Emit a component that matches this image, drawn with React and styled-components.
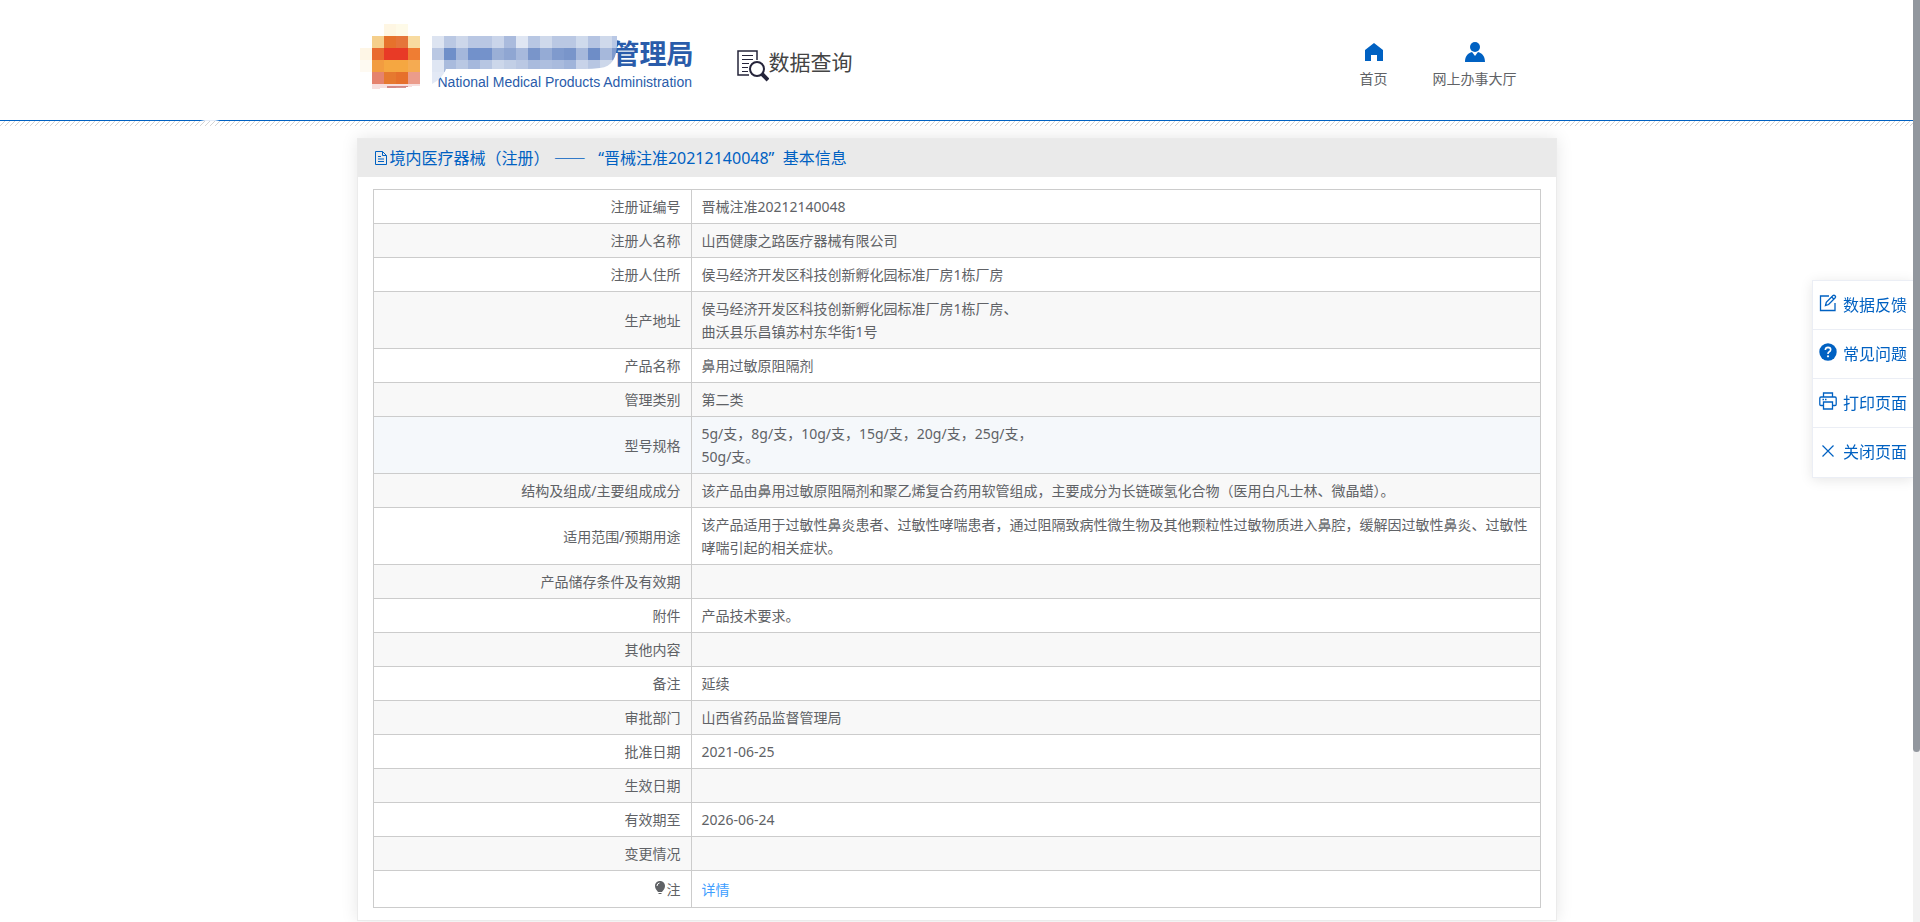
import React from "react";
import styled, { createGlobalStyle } from "styled-components";

const GlobalStyle = createGlobalStyle`
  * { box-sizing: border-box; }
  html { scrollbar-width: none; }
  body {
    margin: 0;
    background: #fff;
    color: #606266;
    font-family: "Noto Sans", "Noto Sans CJK SC", sans-serif;
    font-size: 14px;
    line-height: 23px;
  }
  a { color: inherit; text-decoration: none; }
`;

const Page = styled.div`
  min-height: 100vh;
  padding-right: 7px;
`;

const Header = styled.header`
  background: #fff;
`;

const HeaderInner = styled.div`
  max-width: 1200px;
  height: 120px;
  margin: 0 auto;
  display: flex;
  align-items: flex-start;
`;

const HeaderRule = styled.div`
  height: 1px;
  background: linear-gradient(90deg, #0061c2 200px, #e6eefa 205px, #e6eefa 215px, #0061c2 220px);
`;

const Hatch = styled.div`
  height: 5px;
  background: linear-gradient(135deg, transparent 44%, #d4d4d4 44%, #d4d4d4 56%, transparent 56%) 0 0 / 5px 5px;
`;

const Brand = styled.a`
  position: relative;
  width: 380px;
  padding: 38px 0 0 81px;
  display: block;
  color: #2a5caa;
`;

const BrandName = styled.span`
  display: block;
  width: 256px;
  font-size: 27px;
  font-weight: 700;
  line-height: 32px;
  text-align: right;
`;

const BrandEnglish = styled.span`
  display: block;
  font-family: "Liberation Sans", sans-serif;
  font-size: 14px;
  line-height: 24px;
  white-space: nowrap;
`;

const Mosaic = styled.svg`
  position: absolute;
  left: 3px;
  top: 24px;
`;

const Section = styled.div`
  display: flex;
  align-items: flex-start;
  padding-top: 48px;
  color: #444;
  font-size: 21px;
  line-height: 28px;
  svg { margin-top: 2px; }
`;

const Nav = styled.nav`
  margin-left: auto;
  padding: 41px 40px 0 0;
  display: flex;
  gap: 45px;
`;

const NavLink = styled.a`
  display: flex;
  flex-direction: column;
  align-items: center;
  gap: 4px;
  color: #606266;
  svg { color: #0061c2; }
`;

const Card = styled.main`
  max-width: 1200px;
  margin: 12px auto 0;
  border: 1px solid #ebebeb;
  box-shadow: 0 0 16px rgba(0, 0, 0, 0.1);
  background: #fff;
`;

const CardTitle = styled.h1`
  margin: 0;
  height: 38px;
  padding-left: 16px;
  display: flex;
  align-items: center;
  gap: 2px;
  background: #eaeaea;
  color: #0061c2;
  font-size: 16px;
  font-weight: 400;
  white-space: pre;
`;

const Dash = styled.span`
  font-family: "Noto Sans CJK SC", sans-serif;
`;

const CardBody = styled.div`
  padding: 12px 15px;
`;

const Table = styled.table`
  width: 100%;
  table-layout: fixed;
  border-collapse: collapse;
  border: 1px solid #ccc;
`;

const LabelCol = styled.col`
  width: 318px;
`;

const Row = styled.tr`
  background: ${(p) => (p.$hover ? "#f5f8fb" : "#fff")};
  &:nth-child(even) { background: #f8f8f8; }
`;

const cell = `
  height: 34px;
  padding: 5px 10px;
  border: 1px solid #ccc;
  font-weight: 400;
  vertical-align: middle;
`;

const Label = styled.th`
  ${cell}
  text-align: right;
  ${(p) => p.$tall && "height: 37px;"}
  svg { margin-right: 2px; }
`;

const Value = styled.td`
  ${cell}
  text-align: left;
  white-space: pre-line;
`;

const DetailLink = styled.a`
  && { color: #409eff; }
`;

const SideBar = styled.aside`
  position: fixed;
  top: 280px;
  right: 7px;
  width: 101px;
  border: 1px solid #ebeef5;
  border-right: 0;
  background: #fff;
  box-shadow: 0 2px 12px rgba(0, 0, 0, 0.1);
`;

const SideButton = styled.button`
  width: 100%;
  height: 49px;
  padding: 0 6px;
  display: flex;
  align-items: center;
  gap: 6px;
  border: 0;
  border-bottom: 1px solid #ebeef5;
  background: none;
  color: #0061c2;
  font: inherit;
  font-size: 16px;
  white-space: nowrap;
  &:last-child { border-bottom: 0; }
  svg { flex: none; margin-bottom: 4px; }
`;

const ScrollTrack = styled.div`
  position: fixed;
  top: 0;
  right: 0;
  bottom: 0;
  width: 7px;
  display: grid;
  grid-template-rows: 31fr 7fr;
  background: #f2f2f2;
`;

const ScrollThumb = styled.div`
  border-radius: 0 0 4px 4px;
  background: #92979e;
`;

const emblem = [
  [24, 0, "#fef6e3"], [36, 0, "#fefae8"],
  [12, 12, "#f5cf8b"], [24, 12, "#e6722c"], [36, 12, "#e5753a"], [48, 12, "#f8dba0"],
  [0, 24, "#fef6e6"], [12, 24, "#e96a30"], [24, 24, "#e83a26"], [36, 24, "#e83a26"], [48, 24, "#ef7d33"],
  [0, 36, "#fefaf2"], [12, 36, "#f29c40"], [24, 36, "#f5a741"], [36, 36, "#f5a741"], [48, 36, "#f5ab52"],
  [12, 48, "#e5836e"], [24, 48, "#e6792f"], [36, 48, "#e6702c"], [48, 48, "#eb9c8b"],
];

const bands = [
  ["#dde4f1", "#bac8e3", "#cdd7ea", "#b9c7e3", "#b9c7e3", "#cad5ea", "#aabbdd", "#dfe6f3", "#b8c7e3", "#cfd9eb", "#bac8e3", "#bac8e3", "#cfdaec", "#b5c4e2", "#cfd9eb", "#b9c8e5"],
  ["#bac8e3", "#6f8fc9", "#a4b7db", "#7291cb", "#7492cb", "#9aafd6", "#8fa6d2", "#a7b9dc", "#7995ca", "#95abd5", "#7f9acd", "#7995ca", "#a6b8db", "#6e8dc7", "#a6b8db", "#7f9acd"],
  ["#dfe6f3", "#a9bbdd", "#b9c8e3", "#a5b8dc", "#b7c6e2", "#ccd7ea", "#c2cfe6", "#bac8e3", "#a9bbdd", "#aebfdf", "#a9bbdd", "#a0b4da", "#c8d3e9", "#b7c6e2", "#ccd7ea", "#b9c8e5"],
];

function LogoMosaic() {
  return (
    <Mosaic width="260" height="68" viewBox="0 0 260 68" aria-hidden="true" shapeRendering="crispEdges">
      <defs>
        <clipPath id="band">
          <path d="M72 12H257V20C257 33 252 43 240 44Q232 45 225 45H86Q83 54 72 60Z" />
        </clipPath>
      </defs>
      {emblem.map(([x, y, fill]) => (
        <rect key={`${x}-${y}`} x={x} y={y} width="12" height="12" fill={fill} />
      ))}
      <path d="M12 60H60V62L12 65Z" fill="#f7dfde" />
      <path d="M23 63Q34 61 49 62L45 64H30Z" fill="#bd4d46" opacity=".6" />
      <g clipPath="url(#band)">
        <rect x="72" y="46" width="15" height="14" fill="#e3e9f5" />
        {bands.map((band, r) =>
          band.map((fill, c) => (
            <rect key={`${r}-${c}`} x={72 + c * 12} y={12 + r * 12} width="12" height="12" fill={fill} />
          ))
        )}
      </g>
    </Mosaic>
  );
}

function SearchDocIcon() {
  return (
    <svg width="32" height="32" viewBox="0 0 32 32" fill="none" stroke="#25243a" strokeWidth="2" aria-hidden="true">
      <path d="M20 10V1H1V25H12" strokeWidth="1.500" />
      <path d="M5 5.500H16M5 9.500H16M5 13.500H12M5 17.500H11M5 21.500H11" strokeWidth="1" />
      <circle cx="20" cy="19" r="7" />
      <path d="M25 24L31 30" strokeWidth="4" />
    </svg>
  );
}

function HomeIcon() {
  return (
    <svg width="20" height="22" viewBox="0 0 20 22" fill="currentColor" aria-hidden="true">
      <path d="M10 2L1 9V20H7V14H13V20H19V9Z" />
    </svg>
  );
}

function UserIcon() {
  return (
    <svg width="20" height="22" viewBox="0 0 20 22" fill="currentColor" aria-hidden="true">
      <circle cx="10" cy="6" r="5" />
      <path d="M0 21C0 15 3 12 7 11L10 15L13 11C17 12 20 15 20 21Z" />
    </svg>
  );
}

function DocIcon() {
  return (
    <svg width="14" height="16" viewBox="0 0 14 16" fill="none" stroke="currentColor" aria-hidden="true">
      <path d="M1.500 1.500H8.500L12.500 5.500V14.500H1.500ZM8.500 1.500V5.500H12.500M4 6.500H7M4 9H10M4 11.500H10" />
    </svg>
  );
}

function BulbIcon() {
  return (
    <svg width="10" height="14" viewBox="0 0 10 14" fill="#606266" aria-hidden="true">
      <path d="M5 0C2 0 0 2.200 0 5C0 8 2 9 3 11H7C8 9 10 8 10 5C10 2.200 8 0 5 0Z" />
      <path d="M3.500 12H6.500V13H3.500Z" />
      <path d="M2 5Q2 2.500 4.500 2" fill="none" stroke="#fff" />
    </svg>
  );
}

function EditIcon() {
  return (
    <svg width="18" height="18" viewBox="0 0 18 18" fill="none" stroke="currentColor" strokeWidth="1.300" aria-hidden="true">
      <path d="M10 2H1.500V16.500H16V9" />
      <path d="M6.500 11.500L7.300 8.300L14 1.600Q15 .8 16 1.700Q17 2.700 16.200 3.700L9.600 10.500ZM12.700 3L15 5.200" />
    </svg>
  );
}

function QuestionIcon() {
  return (
    <svg width="18" height="18" viewBox="0 0 18 18" fill="none" aria-hidden="true">
      <circle cx="9" cy="9" r="8.700" fill="currentColor" />
      <path d="M6.300 7Q6.500 4.400 9 4.400Q11.700 4.500 11.700 6.800Q11.600 8.200 10 9Q9 9.500 9 11" stroke="#fff" strokeWidth="1.600" />
      <circle cx="9" cy="13.300" r="1.100" fill="#fff" />
    </svg>
  );
}

function PrintIcon() {
  return (
    <svg width="18" height="18" viewBox="0 0 18 18" fill="none" stroke="currentColor" strokeWidth="1.300" aria-hidden="true">
      <path d="M4.500 5V1H13.500V5M4.500 13.500H2Q.8 13.500 .8 12.300V6.200Q.8 5 2 5H16Q17.200 5 17.200 6.200V12.300Q17.200 13.500 16 13.500H13.500M4.500 10H13.500V17H4.500ZM3.500 7.500H5M6 7.500H7.500" />
    </svg>
  );
}

function CloseIcon() {
  return (
    <svg width="18" height="18" viewBox="0 0 18 18" fill="none" stroke="currentColor" strokeWidth="1.200" aria-hidden="true">
      <path d="M3.500 3.500L14.500 14.500M14.500 3.500L3.500 14.500" />
    </svg>
  );
}

const rows = [
  ["注册证编号", "晋械注准20212140048"],
  ["注册人名称", "山西健康之路医疗器械有限公司"],
  ["注册人住所", "侯马经济开发区科技创新孵化园标准厂房1栋厂房"],
  ["生产地址", "侯马经济开发区科技创新孵化园标准厂房1栋厂房、\n曲沃县乐昌镇苏村东华街1号"],
  ["产品名称", "鼻用过敏原阻隔剂"],
  ["管理类别", "第二类"],
  ["型号规格", "5g/支，8g/支，10g/支，15g/支，20g/支，25g/支，\n50g/支。"],
  ["结构及组成/主要组成成分", "该产品由鼻用过敏原阻隔剂和聚乙烯复合药用软管组成，主要成分为长链碳氢化合物（医用白凡士林、微晶蜡）。"],
  ["适用范围/预期用途", "该产品适用于过敏性鼻炎患者、过敏性哮喘患者，通过阻隔致病性微生物及其他颗粒性过敏物质进入鼻腔，缓解因过敏性鼻炎、过敏性哮喘引起的相关症状。"],
  ["产品储存条件及有效期", ""],
  ["附件", "产品技术要求。"],
  ["其他内容", ""],
  ["备注", "延续"],
  ["审批部门", "山西省药品监督管理局"],
  ["批准日期", "2021-06-25"],
  ["生效日期", ""],
  ["有效期至", "2026-06-24"],
  ["变更情况", ""],
];

const sideItems = [
  [EditIcon, "数据反馈"],
  [QuestionIcon, "常见问题"],
  [PrintIcon, "打印页面"],
  [CloseIcon, "关闭页面"],
];

export default function App() {
  return (
    <Page lang="zh-CN">
      <GlobalStyle />
      <Header>
        <HeaderInner>
          <Brand href="#home">
            <BrandName>管理局</BrandName>
            <BrandEnglish>National Medical Products Administration</BrandEnglish>
            <LogoMosaic />
          </Brand>
          <Section>
            <SearchDocIcon />
            <span>数据查询</span>
          </Section>
          <Nav>
            <NavLink href="#home"><HomeIcon />首页</NavLink>
            <NavLink href="#hall"><UserIcon />网上办事大厅</NavLink>
          </Nav>
        </HeaderInner>
        <HeaderRule />
        <Hatch />
      </Header>
      <Card>
        <CardTitle>
          <DocIcon />
          <span>
            {"境内医疗器械（注册） "}
            <Dash>——</Dash>
            {"   “晋械注准20212140048”  基本信息"}
          </span>
        </CardTitle>
        <CardBody>
          <Table>
            <colgroup>
              <LabelCol />
              <col />
            </colgroup>
            <tbody>
              {rows.map(([label, value]) => (
                <Row key={label} $hover={label === "型号规格"}>
                  <Label scope="row">{label}</Label>
                  <Value>{value}</Value>
                </Row>
              ))}
              <Row>
                <Label scope="row" $tall><BulbIcon />注</Label>
                <Value><DetailLink href="#detail">详情</DetailLink></Value>
              </Row>
            </tbody>
          </Table>
        </CardBody>
      </Card>
      <SideBar>
        {sideItems.map(([Icon, text]) => (
          <SideButton key={text} type="button"><Icon />{text}</SideButton>
        ))}
      </SideBar>
      <ScrollTrack aria-hidden="true"><ScrollThumb /></ScrollTrack>
    </Page>
  );
}
